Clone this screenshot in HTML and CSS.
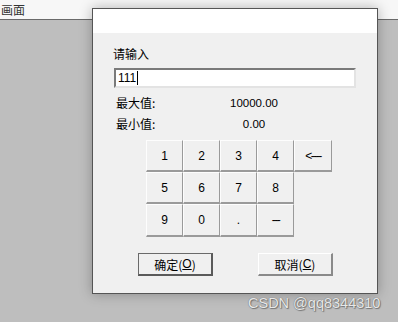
FILE: index.html
```html
<!DOCTYPE html>
<html>
<head>
<meta charset="utf-8">
<link rel="stylesheet" href="styles.css">
</head>
<body>
<div class="screen">
  <div class="topbar"><span class="topbar-title">画面</span></div>
  <div class="desktop">
    <div class="dialog">
      <div class="dialog-title"></div>
      <div class="dialog-body">
        <div class="prompt">请输入</div>
        <div class="input"><span class="input-text">111</span><span class="caret"></span></div>
        <div class="range">
          <div class="range-row"><span class="range-label">最大值:</span><span class="range-value">10000.00</span></div>
          <div class="range-row"><span class="range-label">最小值:</span><span class="range-value">0.00</span></div>
        </div>
        <div class="keypad">
          <div class="key">1</div><div class="key">2</div><div class="key">3</div><div class="key">4</div><div class="key key-dash">&lt;----</div>
          <div class="key">5</div><div class="key">6</div><div class="key">7</div><div class="key">8</div><div class="key-gap"></div>
          <div class="key">9</div><div class="key">0</div><div class="key">.</div><div class="key key-dash">---</div><div class="key-gap"></div>
        </div>
        <div class="actions">
          <div class="btn btn-default">确定(<u>O</u>)</div>
          <div class="btn">取消(<u>C</u>)</div>
        </div>
      </div>
    </div>
    <div class="watermark">CSDN @qq8344310</div>
  </div>
</div>
</body>
</html>
```
FILE: styles.css
```css
html, body {
  margin: 0;
  padding: 0;
}
body {
  width: 398px;
  height: 322px;
  overflow: hidden;
  font-family: "Noto Sans CJK SC", "Liberation Sans", sans-serif;
  font-size: 12px;
  color: #000;
}
.screen {
  position: relative;
  width: 398px;
  height: 322px;
  display: flex;
  flex-direction: column;
  background: #c0c0c0;
}
.topbar {
  height: 19px;
  background: #f7f7f7;
  border-bottom: 1px solid #6a6a6a;
  display: flex;
  align-items: center;
}
.topbar-title {
  padding-left: 1px;
  font-size: 12px;
  line-height: 16px;
  color: #333;
}
.desktop {
  flex: 1;
  background: #bebebe;
}
.dialog {
  position: absolute;
  left: 92px;
  top: 8px;
  width: 284px;
  height: 284px;
  border: 1px solid #555;
  background: #f0f0f0;
  box-shadow: 0 0 12px rgba(0, 0, 0, 0.28);
  display: flex;
  flex-direction: column;
}
.dialog-title {
  height: 24px;
  background: #fff;
}
.dialog-body {
  flex: 1;
  padding: 13px 0 0 20px;
  display: flex;
  flex-direction: column;
}
.prompt {
  line-height: 16px;
  height: 16px;
}
.input {
  margin-top: 6px;
  margin-left: 1px;
  width: 236px;
  height: 16px;
  background: #fff;
  border-style: solid;
  border-width: 2px;
  border-color: #7a7a7a #e3e3e3 #e3e3e3 #7a7a7a;
  display: flex;
  align-items: center;
  padding-left: 2px;
  font-family: "Liberation Sans", sans-serif;
  font-size: 12px;
}
.caret {
  display: inline-block;
  width: 1px;
  height: 14px;
  background: #000;
  margin-left: 1px;
}
.range {
  margin-top: 7px;
  display: flex;
  flex-direction: column;
  gap: 5px;
}
.range-row {
  display: flex;
  height: 16px;
  line-height: 16px;
}
.range-label {
  width: 88px;
  padding-left: 3px;
}
.range-value {
  width: 100px;
  text-align: center;
  font-family: "Liberation Sans", sans-serif;
  font-size: 11.5px;
}
.keypad {
  margin-top: 8px;
  margin-left: 33px;
  display: grid;
  grid-template-columns: 37px 37px 37px 37px 38px;
  grid-template-rows: 32px 32px 33px;
  width: 186px;
}
.key {
  box-sizing: border-box;
  border-style: solid;
  border-width: 1px 1px 2px 1px;
  border-color: #fdfdfd #9a9a9a #9a9a9a #fdfdfd;
  background: #f0f0f0;
  display: flex;
  align-items: center;
  justify-content: center;
  font-family: "Liberation Sans", sans-serif;
  font-size: 12px;
}
.key-dash {
  letter-spacing: -1.5px;
}
.actions {
  margin-top: 16px;
  margin-left: 25px;
  display: flex;
  gap: 45px;
}
.btn {
  box-sizing: border-box;
  width: 75px;
  height: 23px;
  border-style: solid;
  border-width: 1px 2px 2px 1px;
  border-color: #fff #8a8a8a #8a8a8a #fff;
  background: #f0f0f0;
  display: flex;
  align-items: center;
  justify-content: center;
  font-size: 12px;
}
.btn u {
  font-family: "Liberation Sans", sans-serif;
}
.btn-default {
  border-color: #6a6a6a #5a5a5a #5a5a5a #6a6a6a;
}
.watermark {
  position: absolute;
  left: 248px;
  top: 295px;
  font-family: "Liberation Sans", sans-serif;
  font-size: 14.5px;
  color: #e8e8e8;
  text-shadow: 0 0 1px #555, 1px 1px 1px #777;
}
```
